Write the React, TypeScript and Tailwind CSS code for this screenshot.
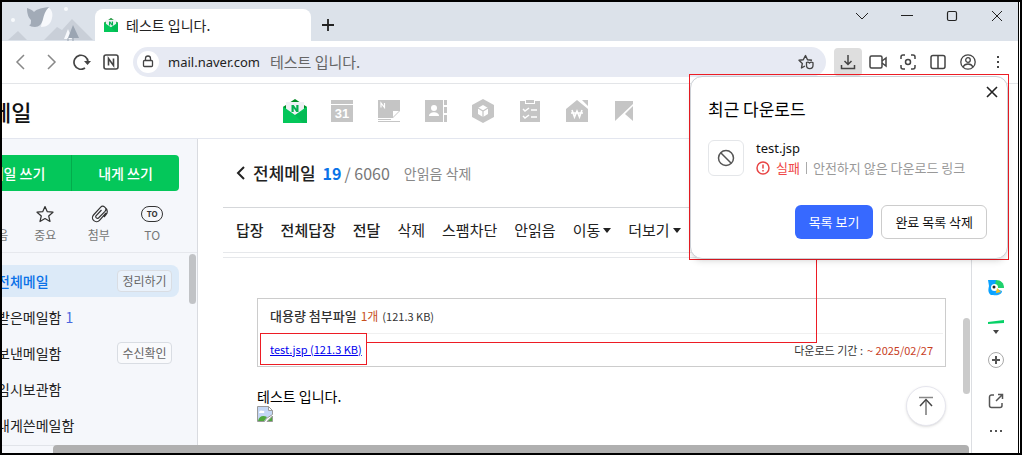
import type { ReactNode } from "react";

type SvgProps = { w: number; h: number; children: ReactNode; className?: string };

function Svg({ w, h, children, className }: SvgProps) {
  return (
    <svg
      width={w}
      height={h}
      viewBox={`0 0 ${w} ${h}`}
      fill="none"
      stroke="currentColor"
      strokeWidth="1.5"
      className={className}
      aria-hidden="true"
    >
      {children}
    </svg>
  );
}

function MailLogo({ size }: { size: number }) {
  return (
    <svg width={size} height={size} viewBox="0 0 24 24" aria-hidden="true">
      <path d="M0 8 12 0l12 8v6H0z" fill="#008a22" />
      <path d="M3 3h18v11l-9 7-9-7z" fill="#eef1f4" />
      <path d="M8.500 13V6h2.200l2.600 3.800V6h2.200v7h-2.200l-2.600-3.800V13z" fill="#03b04f" />
      <path d="M0 7.500 12 16l12-8.500V24H0z" fill="#04c75a" />
      <path d="m12 16 12-6v14h-4z" fill="#02b350" opacity=".6" />
    </svg>
  );
}

function WinterScene() {
  return (
    <svg width="92" height="39" viewBox="0 0 92 39" aria-hidden="true">
      <path d="M6 38 16 29l9 9z" fill="#c9cfd8" />
      <path d="M42 38 55 25l5 3 10-11 21 21z" fill="#c9cfd8" />
      <path d="M42 6h5c3 2 4 6 3 10-1 6-5 9-11 9z" fill="#f7f9fc" />
      <path d="M25 6c4 1 6 3 7 4 2-2 5-4 15-5-4 4-5 8-6 12-1 5-4 8-8 8-3 0-5-1-6-2 2 0 2-2 2-5-2-2-4-5-4-12z" fill="#a2abb7" />
      <circle cx="11" cy="18" r="2" fill="#f7f9fc" />
      <circle cx="64" cy="7" r="2" fill="#f7f9fc" />
      <path d="m66 27-4 10h8z" fill="#f7f9fc" />
      <path d="m71 23-5 13h11z" fill="#9ba5b2" />
      <path d="M66 36v3m5-4v4" stroke="#9ba5b2" />
    </svg>
  );
}

const services: { name: string; icon: ReactNode }[] = [
  {
    name: "캘린더",
    icon: (
      <>
        <path d="M1 1h22v4H1zM1 6h22v17H1z" />
        <text x="12" y="19" textAnchor="middle" fontSize="13" fontWeight="700" fill="#fff" fontFamily="Liberation Sans, sans-serif">31</text>
      </>
    ),
  },
  {
    name: "메모",
    icon: (
      <>
        <path d="M1 1h22v11l-7 7H1z" />
        <path d="M16 12h6l-6 6z" fill="#fff" />
        <path d="M1 20h13v1H1zM1 22h22v1H1z" />
        <path d="M4 8.500V4l3.500 4.500V4" stroke="#fff" strokeWidth="1.200" fill="none" />
      </>
    ),
  },
  {
    name: "주소록",
    icon: (
      <>
        <path d="M1 1h18v22H1zM20 1h3v5h-3zM20 8h3v6h-3zM20 16h3v7h-3z" />
        <circle cx="10" cy="9" r="3" fill="#fff" />
        <path d="M5 17c0-5 10-5 10 0z" fill="#fff" />
      </>
    ),
  },
  {
    name: "마이박스",
    icon: (
      <>
        <path d="M12 0 23 6v12l-11 6L1 18V6z" />
        <path d="m12 6 5 3v6l-5 3-5-3V9z" fill="#fff" />
        <path d="m7 9 5 3 5-3M12 12v6" stroke="#c5c5c5" strokeWidth="1.200" fill="none" />
      </>
    ),
  },
  {
    name: "할 일",
    icon: (
      <>
        <path d="M2 2h5v3h10V2h5v21H2z" />
        <path d="M8 1h8v3H8z" />
        <path d="m5 10 2 2 4-3M13 11h6M5 17l2 2 4-3M13 18h6" stroke="#fff" strokeWidth="1.500" fill="none" />
      </>
    ),
  },
  {
    name: "가계부",
    icon: (
      <>
        <path d="M12 1 23 10v13H1V10zM17 1h6v6z" />
        <path d="m7 11 2.500 7 2.500-6 2.500 6 2.500-7M6 14h12" stroke="#fff" strokeWidth="1.600" fill="none" />
      </>
    ),
  },
  {
    name: "북마크",
    icon: (
      <>
        <path d="M3 2h18v3L3 22z" />
        <path d="M21 7v15l-8-7z" />
      </>
    ),
  },
];

const actions: { label: string; strong?: boolean; caret?: boolean }[] = [
  { label: "답장", strong: true },
  { label: "전체답장", strong: true },
  { label: "전달", strong: true },
  { label: "삭제" },
  { label: "스팸차단" },
  { label: "안읽음" },
  { label: "이동", caret: true },
  { label: "더보기", caret: true },
];

const folders: { label: string; count?: number; action?: string; active?: boolean }[] = [
  { label: "전체메일", action: "정리하기", active: true },
  { label: "받은메일함", count: 1 },
  { label: "보낸메일함", action: "수신확인" },
  { label: "임시보관함" },
  { label: "내게쓴메일함" },
];

function Caret() {
  return <span className="ml-[3px] border-x-4 border-t-[5px] border-x-transparent border-t-[#222]" />;
}

function TabStrip() {
  return (
    <div className="flex h-[39px] shrink-0 items-stretch bg-[#dce2ea]">
      <div className="w-[93px] shrink-0">
        <WinterScene />
      </div>
      <div className="mt-[7px] flex w-[216px] items-center gap-2 rounded-t-lg bg-white pl-[9px] text-[14px] leading-5 text-[#222]">
        <MailLogo size={14} />
        <span>테스트 입니다.</span>
      </div>
      <button type="button" aria-label="새 탭" className="mt-[7px] flex w-[34px] items-center justify-center text-[#222]">
        <Svg w={12} h={12}>
          <path d="M6 0v12M0 6h12" strokeWidth="1.800" />
        </Svg>
      </button>
      <div className="mr-[15px] ml-auto flex gap-[33px] pt-2 text-[#222]">
        <button type="button" aria-label="탭 목록" className="flex h-3 w-3 items-center justify-center">
          <Svg w={12} h={12} className="shrink-0"><path d="m0 3 6 6 6-6" strokeWidth="1" /></Svg>
        </button>
        <button type="button" aria-label="최소화" className="flex h-3 w-3 items-center justify-center">
          <Svg w={12} h={12} className="shrink-0"><path d="M0 5.500h12" strokeWidth="1" /></Svg>
        </button>
        <button type="button" aria-label="최대화" className="flex h-3 w-3 items-center justify-center">
          <Svg w={12} h={12} className="shrink-0"><rect x="1.500" y="1.500" width="9" height="9" rx="1.500" strokeWidth="1.200" /></Svg>
        </button>
        <button type="button" aria-label="닫기" className="flex h-3 w-3 items-center justify-center">
          <Svg w={12} h={12} className="shrink-0"><path d="m1 1 10 10M11 1 1 11" strokeWidth="1" /></Svg>
        </button>
      </div>
    </div>
  );
}

function AddressBar() {
  return (
    <div className="flex h-[43px] shrink-0 items-center border-b border-[#e3e5e8] pr-[14px] text-[#444]">
      <div className="flex w-[131px] shrink-0 items-center pl-[11px]">
        <button type="button" aria-label="뒤로" className="flex w-[30px] text-[#888]">
          <Svg w={16} h={16}><path d="m11 1-7 7 7 7" /></Svg>
        </button>
        <button type="button" aria-label="앞으로" className="flex w-[30px] text-[#888]">
          <Svg w={16} h={16}><path d="m5 1 7 7-7 7" /></Svg>
        </button>
        <button type="button" aria-label="새로고침" className="flex w-[30px]">
          <Svg w={18} h={16}>
            <path d="M12 14A7 7 0 1 1 15 8" strokeWidth="1.700" />
            <path d="M11 7h7l-3.500 4z" fill="currentColor" stroke="none" />
          </Svg>
        </button>
        <button type="button" aria-label="네이버" className="flex">
          <Svg w={16} h={16}>
            <rect x="1" y="1" width="14" height="14" rx="2" strokeWidth="1.600" />
            <path d="M5.500 11.500v-7l5 7v-7" strokeWidth="1.600" />
          </Svg>
        </button>
      </div>
      <div className="flex h-[30px] min-w-0 flex-1 items-center rounded-full bg-[#e7eaf3] pr-[10px] pl-1">
        <span className="flex h-[22px] w-[22px] shrink-0 items-center justify-center rounded-full bg-white">
          <Svg w={12} h={14}>
            <rect x="1.500" y="5.500" width="9" height="6" rx="1" strokeWidth="1.300" />
            <path d="M3.500 5V3.500a2.500 2.500 0 0 1 5 0V5" strokeWidth="1.300" />
          </Svg>
        </span>
        <span className="ml-[9px] font-['Noto_Sans',sans-serif] text-[13px] leading-5 text-[#222]">mail.naver.com</span>
        <span className="ml-[10px] text-[15px] leading-5 text-[#666]">테스트 입니다.</span>
        <button type="button" aria-label="즐겨찾기" className="ml-auto flex">
          <Svg w={18} h={16}>
            <path d="M7 12 3.500 14l.8-4.500L1 6.300l4.300-.6L7.500 1.500l2 4.200 4.500.6" strokeWidth="1.400" strokeLinejoin="round" />
            <path d="M8.500 8.500c1.500-1 2.500 0 3 .5.600-.5 2-1.300 3.500-.3v2.600a3.200 3.200 0 0 1-6.500 0z" strokeWidth="1.300" />
          </Svg>
        </button>
      </div>
      <div className="ml-2 flex shrink-0 items-center gap-[2px]">
        <button type="button" aria-label="다운로드" className="flex h-7 w-7 items-center justify-center rounded bg-[#dedede]">
          <Svg w={16} h={16}><path d="M8 1v9M4.500 7 8 10.500 11.500 7M1.500 11v3.500h13V11" /></Svg>
        </button>
        <button type="button" aria-label="화면 녹화" className="flex h-7 w-7 items-center justify-center">
          <Svg w={18} h={16}><rect x="1" y="2" width="12" height="12" rx="1.500" /><path d="m13 7 4-3v8l-4-3" /></Svg>
        </button>
        <button type="button" aria-label="캡처" className="flex h-7 w-7 items-center justify-center">
          <Svg w={16} h={16}><path d="M1 5V3a2 2 0 0 1 2-2h2M11 1h2a2 2 0 0 1 2 2v2M15 11v2a2 2 0 0 1-2 2h-2M5 15H3a2 2 0 0 1-2-2v-2" /><circle cx="8" cy="8" r="2.500" /></Svg>
        </button>
        <button type="button" aria-label="화면 분할" className="flex h-7 w-7 items-center justify-center">
          <Svg w={16} h={16}><rect x="1" y="1.500" width="14" height="13" rx="2" /><path d="M8 2v12" /></Svg>
        </button>
        <button type="button" aria-label="프로필" className="flex h-7 w-7 items-center justify-center">
          <Svg w={16} h={16}><circle cx="8" cy="8" r="7.200" strokeWidth="1.300" /><circle cx="8" cy="6" r="2.300" strokeWidth="1.300" /><path d="M3 13c2-4 8-4 10 0" strokeWidth="1.300" /></Svg>
        </button>
        <button type="button" aria-label="메뉴" className="flex h-7 w-5 items-center justify-end">
          <Svg w={12} h={12}><path d="M5 1h2M5 6h2M5 11h2" strokeWidth="2" /></Svg>
        </button>
      </div>
    </div>
  );
}

function ServiceHeader() {
  return (
    <header className="relative z-10 flex h-[55px] shrink-0 items-center overflow-hidden border-b border-[#e3e6ef] bg-white">
      <h1 className="-ml-[11px] w-[292px] shrink-0 text-[22px] leading-7 font-medium text-[#111]">메일</h1>
      <nav className="flex gap-[23px]">
        <a href="#mail" aria-label="메일"><MailLogo size={24} /></a>
        {services.map((s) => (
          <a key={s.name} href="#service" aria-label={s.name}>
            <svg width="24" height="24" viewBox="0 0 24 24" fill="#c5c5c5" aria-hidden="true">{s.icon}</svg>
          </a>
        ))}
      </nav>
    </header>
  );
}

function Sidebar() {
  return (
    <aside className="flex w-[196px] shrink-0 flex-col overflow-hidden border-r border-[#d9dbe0] bg-[#f5f7fb]">
      <div className="-ml-[37px] pr-[18px]">
        <div className="mt-4 grid h-9 grid-cols-2 overflow-hidden rounded bg-[#04c75a] text-[14px] leading-5 font-medium text-white">
          <button type="button" className="border-r border-[#03ab4c]">메일 쓰기</button>
          <button type="button">내게 쓰기</button>
        </div>
        <div className="mt-[14px] grid grid-cols-4 text-[12px] leading-4 text-[#777]">
          <button type="button" className="flex flex-col items-center gap-1">
            <Svg w={22} h={18}><rect x="2" y="3" width="18" height="12" rx="1" /><path d="m2 4 9 7 9-7" /></Svg>
            안읽음
          </button>
          <button type="button" className="flex flex-col items-center gap-1">
            <Svg w={22} h={18} className="text-[#333]"><path d="m11 1.500 2.300 5.200 5.700.5-4.300 3.800 1.300 5.500-5-2.900-5 2.900 1.300-5.500L3 7.200l5.700-.5z" strokeWidth="1.200" strokeLinejoin="round" /></Svg>
            중요
          </button>
          <button type="button" className="flex flex-col items-center gap-1">
            <Svg w={22} h={18} className="text-[#333]"><path d="m18 8-6.500 7.300a4 4 0 0 1-6-5.300l7-7.600a3 3 0 0 1 4.500 4L10.500 13a1.700 1.700 0 0 1-2.500-2.200L13.500 5M16 12l2-2.300a4.500 4.500 0 0 0-.5-6.700" strokeWidth="1.200" /></Svg>
            첨부
          </button>
          <button type="button" className="flex flex-col items-center gap-1">
            <span className="flex h-[18px] items-center">
              <span className="flex h-4 w-[22px] items-center justify-center rounded-full border border-[#333] text-[8px] leading-3 font-bold text-[#333]">TO</span>
            </span>
            TO
          </button>
        </div>
      </div>
      <div className="mt-[9px] flex items-start justify-between border-t border-[#e6e8ed]">
        <nav className="mt-3 -ml-[37px] w-[214px]">
          {folders.map((f) => (
            <div
              key={f.label}
              className={
                f.active
                  ? "mb-1 flex h-8 items-center justify-between rounded-lg bg-[#dceaf8] pr-[7px] pl-8 text-[14px] leading-5 font-medium text-[#0a72e8]"
                  : "mb-1 flex h-8 items-center justify-between pr-[7px] pl-8 text-[14px] leading-5 text-[#222]"
              }
            >
              <a href="#folder">
                {f.label}
                {f.count !== undefined && <span className="ml-1 text-[#4a67e0]">{f.count}</span>}
              </a>
              {f.action && (
                <button type="button" className="h-[22px] w-[55px] rounded border border-[#d9dde3] bg-white/40 text-[12px] leading-4 font-normal text-[#666]">
                  {f.action}
                </button>
              )}
            </div>
          ))}
          <div className="mt-[3px] h-px bg-[#e1e4e9]" />
        </nav>
        <div className="mt-px mr-px h-[50px] w-[7px] shrink-0 rounded-full bg-[#c1c3c6]" />
      </div>
    </aside>
  );
}

function BrokenImage() {
  return (
    <svg width="16" height="16" viewBox="0 0 16 16" role="img" aria-label="깨진 이미지">
      <path d="M.5.5h11l4 4v4l-6 4-2 3h-7z" fill="#c4d7f5" stroke="#9a9a9a" />
      <path d="M11.500.5v4h4z" fill="#fff" stroke="#9a9a9a" />
      <path d="M2 7c0-2 2-3 3-2 2-1 3 1 2 2z" fill="#fff" />
      <path d="M1 15c1-5 5-6 9-4l-3 4z" fill="#4fa83d" />
      <path d="M15.500 10v5.500H10z" fill="#4fa83d" stroke="#9a9a9a" />
    </svg>
  );
}

function MailView() {
  return (
    <main className="flex min-w-0 flex-1 flex-col pl-[25px]">
      <div className="flex h-[69px] items-center border-b border-[#d5d7da] pl-3">
        <button type="button" aria-label="목록으로" className="flex w-[18px] text-[#222]">
          <Svg w={10} h={14}><path d="M9 1 3 7l6 6" strokeWidth="2" /></Svg>
        </button>
        <h2 className="text-[17px] leading-6 font-medium text-[#222]">전체메일</h2>
        <b className="ml-[7px] text-[16px] leading-6 text-[#0a72e8]">19</b>
        <span className="ml-[3px] text-[16px] leading-6 text-[#777]">/ 6060</span>
        <button type="button" className="ml-[14px] text-[14px] leading-5 text-[#888]">안읽음 삭제</button>
      </div>
      <div className="flex h-[45px] items-center gap-[17px] border-b border-[#e6e8eb] pl-[13px] text-[15px] leading-5 text-[#222]">
        {actions.map((a) => (
          <button key={a.label} type="button" className={a.strong ? "font-medium whitespace-nowrap" : "flex items-center whitespace-nowrap"}>
            {a.label}
            {a.caret && <Caret />}
          </button>
        ))}
      </div>
      <div className="mt-1 h-px bg-[#e6e8eb]" />
      <div className="flex flex-1">
        <article className="mt-10 min-w-0 flex-1 pl-[34px] text-[11px] leading-4">
          <div className="border border-[#ccc] px-[2px] pb-px text-[#333]">
            <div className="flex h-[34px] items-center gap-1 pl-[10px]">
              <b className="text-[13px] font-medium">대용량 첨부파일</b>
              <span className="text-[12px] text-[#c8501e]">1개</span>
              <span>(121.3 KB)</span>
            </div>
            <div className="flex h-8 items-stretch border-t border-[#f0f0f0]">
              <div className="-mt-px flex items-center border border-[#ed1c24] pr-1 pl-[9px]">
                <a href="#attachment" className="text-[#0000ee] underline">test.jsp (121.3 KB)</a>
              </div>
              <div className="ml-auto flex items-center gap-1 pr-[10px]">
                <span>다운로드 기간 :</span>
                <span className="text-[#c8401e]">~ 2025/02/27</span>
              </div>
            </div>
          </div>
          <p className="mt-[19px] text-[14px] leading-5 text-black">테스트 입니다.</p>
          <div className="flex items-start justify-between">
            <BrokenImage />
            <button type="button" aria-label="맨 위로" className="-mt-5 flex h-10 w-10 items-center justify-center rounded-full border border-[#e6e6ee] bg-white text-[#444] shadow">
              <Svg w={16} h={20}><path d="M1 1.500h14" stroke="#888" /><path d="M8 4v15" stroke="#777" /><path d="m2 10 6-6.500L14 10" /></Svg>
            </button>
          </div>
        </article>
        <div className="mt-[60px] ml-[17px] h-[76px] w-[7px] rounded-full bg-[#cbcbcb]" />
      </div>
    </main>
  );
}

function WhaleRail() {
  return (
    <aside className="ml-px flex w-[47px] shrink-0 flex-col items-center border-l border-[#dcdee2] bg-white pt-[141px] pl-[2px] text-[#555]">
      <button type="button" aria-label="웨일" className="flex">
        <svg width="16" height="16" viewBox="0 0 16 16" aria-hidden="true">
          <path d="M0 0h8v15H3c-3-2-3-5-2-9z" fill="#0aa2ff" />
          <path d="M5 15c5 1 9-1 9-4l-5-2z" fill="#18a8ff" />
          <path d="M8 0c5 0 8 3 8 8H9L7 5z" fill="#1fd16d" />
          <circle cx="6.500" cy="7.500" r="3.500" fill="#fff" />
          <circle cx="6" cy="7" r="1.500" fill="#222" />
          <path d="m9 8 4 4-5 1z" fill="#ffc21a" />
        </svg>
      </button>
      <button type="button" aria-label="접기" className="mt-6 flex flex-col items-center gap-[6px]">
        <svg width="16" height="4" viewBox="0 0 16 4" aria-hidden="true"><path d="m0 2 16-2v3L0 4z" fill="#06d167" /></svg>
        <span className="border-x-[3px] border-t-4 border-x-transparent border-t-[#444]" />
      </button>
      <button type="button" aria-label="추가" className="mt-[18px] flex h-4 w-4 items-center justify-center rounded-full border border-[#aaa]">
        <Svg w={8} h={8}><path d="M4 0v8M0 4h8" strokeWidth="2" /></Svg>
      </button>
      <button type="button" aria-label="새 창" className="mt-[25px] flex">
        <Svg w={16} h={16}><path d="M6 2H3.500A2 2 0 0 0 1.500 4v8.500a2 2 0 0 0 2 2H12a2 2 0 0 0 2-2V10M10 1.500h4.500V6M14 2 8 8" /></Svg>
      </button>
      <button type="button" aria-label="더보기" className="mt-5 flex">
        <Svg w={12} h={4}><path d="M0 2h2M5 2h2M10 2h2" strokeWidth="2" /></Svg>
      </button>
    </aside>
  );
}

function DownloadPopup() {
  return (
    <section className="absolute top-[72px] right-[9px] z-20 w-[320px] border border-[#ed1c24]">
      <div className="relative mt-px flex flex-col rounded-xl border border-[#ccd0d6] bg-white pt-[22px] pr-5 pb-[19px] pl-[17px] shadow-md">
        <button type="button" aria-label="닫기" className="absolute top-[9px] right-[9px] flex text-[#222]">
          <Svg w={12} h={12}><path d="m1 1 10 10M11 1 1 11" strokeWidth="1.600" /></Svg>
        </button>
        <h2 className="text-[17px] leading-5 text-black">최근 다운로드</h2>
        <div className="mt-[21px] flex gap-3">
          <span className="flex h-9 w-9 shrink-0 items-center justify-center rounded-md border border-[#e4e6e9] text-[#555]">
            <Svg w={18} h={18}><circle cx="9" cy="9" r="7.500" /><path d="m4 4 10 10" /></Svg>
          </span>
          <div>
            <p className="font-['Noto_Sans',sans-serif] text-[13px] leading-4 text-[#111]">test.jsp</p>
            <p className="mt-1 flex items-center text-[13px] leading-4 whitespace-nowrap text-[#999]">
              <Svg w={14} h={14} className="text-[#e84545]"><circle cx="7" cy="7" r="6" /><path d="M7 3.500v4M7 9v1.500" /></Svg>
              <span className="ml-[6px] text-[#f04848]">실패</span>
              <span className="mx-[6px] h-3 w-px bg-[#aaa]" />
              <span>안전하지 않은 다운로드 링크</span>
            </p>
          </div>
        </div>
        <div className="mt-[29px] flex justify-end gap-2 text-[13px] leading-5">
          <button type="button" className="h-[34px] rounded-md bg-[#3769ff] px-[14px] text-white">목록 보기</button>
          <button type="button" className="h-[34px] rounded-md border border-[#ccc] bg-white px-[13px] text-[#111]">완료 목록 삭제</button>
        </div>
      </div>
    </section>
  );
}

export default function App() {
  return (
    <div className="flex min-h-screen flex-col border-2 border-black bg-white font-['Noto_Sans_CJK_KR','Noto_Sans',sans-serif]">
      <div className="relative mr-px flex flex-1 flex-col overflow-hidden border-r border-black">
        <TabStrip />
        <AddressBar />
        <div className="flex flex-1">
          <div className="flex min-w-0 flex-1 flex-col">
            <ServiceHeader />
            <div className="flex flex-1">
              <Sidebar />
              <MailView />
            </div>
          </div>
          <div className="flex pt-[55px]">
            <WhaleRail />
          </div>
        </div>
        <div className="absolute right-[49px] bottom-0 left-[51px] h-2 rounded-t bg-[#b0b0b0]" />
        <div className="pointer-events-none absolute top-[258px] right-[201px] left-[364px] z-10 h-[83px] border-r border-b border-[#ed1c24]" />
        <DownloadPopup />
      </div>
    </div>
  );
}
